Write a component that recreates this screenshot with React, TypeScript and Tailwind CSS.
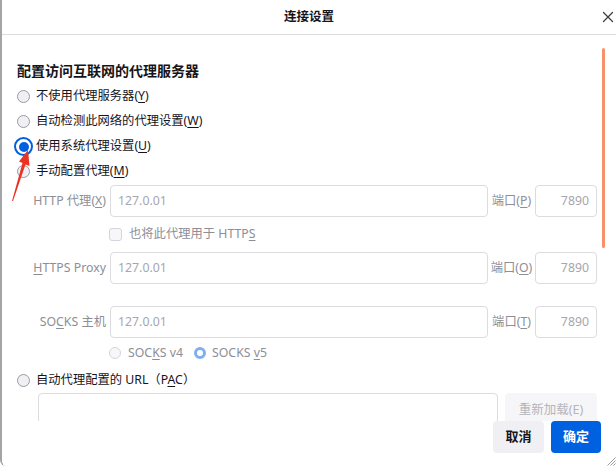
import React from 'react';

const ink = 'text-[#15141a]';
const dim = 'text-[#8e8e96]';

function Radio({ state }: { state: 'off' | 'on' | 'disabled' | 'disabledOn' }) {
  if (state === 'on') {
    return (
      <span className="flex h-[19px] w-[19px] shrink-0 items-center justify-center rounded-full border-2 border-[#0061e0] bg-white -ml-[3px] mr-[-3px]">
        <span className="h-[10px] w-[10px] rounded-full bg-[#0061e0]" />
      </span>
    );
  }
  if (state === 'disabledOn') {
    return <span className="h-[12px] w-[12px] shrink-0 rounded-full border-[3.5px] border-[#80aef0] bg-white" />;
  }
  if (state === 'disabled') {
    return <span className="h-[12px] w-[12px] shrink-0 rounded-full border border-[#d4d4dc] bg-[#f7f7f9]" />;
  }
  return <span className="h-[13px] w-[13px] shrink-0 rounded-full border border-[#9a9aa4] bg-[#f0f0f4]" />;
}

function RadioRow({ children, state = 'off' }: { children: React.ReactNode; state?: 'off' | 'on' }) {
  return (
    <div className={`flex h-[25px] shrink-0 items-center gap-[6px] text-[12.3px] ${ink}`}>
      <Radio state={state} />
      <span>{children}</span>
    </div>
  );
}

function ProxyRow({ label, port }: { label: React.ReactNode; port: React.ReactNode }) {
  return (
    <div className={`flex h-[32px] items-stretch text-[12.3px] ${dim}`}>
      <div className="flex w-[91px] shrink-0 items-center justify-end whitespace-nowrap pr-[4px]">{label}</div>
      <div className="flex flex-1 items-center rounded-[4px] border border-[#dcdce0] bg-white pl-[7px] text-[#a6a6ae]">127.0.01</div>
      <div className="flex w-[47px] shrink-0 items-center justify-center whitespace-nowrap">{port}</div>
      <div className="flex w-[62px] shrink-0 items-center justify-end rounded-[4px] border border-[#dcdce0] bg-white pr-[7px] text-[#a6a6ae]">7890</div>
    </div>
  );
}

export default function App() {
  return (
    <div className="relative flex h-[466px] w-[616px] flex-col overflow-hidden rounded-bl-[6px] border-l-2 border-[#a4a4a4] bg-white font-['Noto_Sans','Noto_Sans_CJK_SC',sans-serif]">
      {/* title bar */}
      <div className="grid h-[35px] shrink-0 grid-cols-[1fr_auto_1fr] items-center border-b border-[#dcdce0]">
        <div />
        <div className={`text-[12.5px] font-bold ${ink}`}>连接设置</div>
        <div className="flex justify-end pr-[2px]">
          <svg width="12" height="12" viewBox="0 0 12 12" fill="none" stroke="#3a3a40" strokeWidth="1.2" strokeLinecap="round">
            <path d="M1.5 1.5l9 9M10.5 1.5l-9 9" />
          </svg>
        </div>
      </div>

      {/* scrolling content */}
      <div className="flex h-[386px] shrink-0 overflow-hidden">
        <div className="flex flex-1 flex-col pl-[15px] pr-[5px] pt-[26px]">
          <div className={`h-[23px] shrink-0 text-[14px] font-bold leading-[20px] ${ink}`}>配置访问互联网的代理服务器</div>
          <RadioRow>不使用代理服务器(<u className="underline-offset-2">Y</u>)</RadioRow>
          <RadioRow>自动检测此网络的代理设置(<u className="underline-offset-2">W</u>)</RadioRow>
          <RadioRow state="on">使用系统代理设置(<u className="underline-offset-2">U</u>)</RadioRow>
          <RadioRow>手动配置代理(<u className="underline-offset-2">M</u>)</RadioRow>

          <div className="mt-[1px] shrink-0 pl-[2px]">
            <ProxyRow
              label={<>HTTP 代理(<u className="underline-offset-2">X</u>)</>}
              port={<>端口(<u className="underline-offset-2">P</u>)</>}
            />
          </div>
          <div className={`flex h-[35px] shrink-0 items-center gap-[7px] pl-[92px] text-[12.3px] ${dim}`}>
            <span className="h-[13px] w-[13px] rounded-[3px] border border-[#d4d4dc] bg-[#f7f7f9]" />
            <span>也将此代理用于 HTTP<u className="underline-offset-2">S</u></span>
          </div>
          <div className="shrink-0 pl-[2px]">
            <ProxyRow
              label={<><u className="underline-offset-2">H</u>TTPS Proxy</>}
              port={<>端口(<u className="underline-offset-2">O</u>)</>}
            />
          </div>
          <div className="mt-[22px] shrink-0 pl-[2px]">
            <ProxyRow
              label={<>SO<u className="underline-offset-2">C</u>KS 主机</>}
              port={<>端口(<u className="underline-offset-2">T</u>)</>}
            />
          </div>
          <div className={`flex h-[30px] shrink-0 items-center pl-[92px] text-[12.3px] ${dim}`}>
            <Radio state="disabled" />
            <span className="ml-[7px] mr-[11px]">SOC<u className="underline-offset-2">K</u>S v4</span>
            <Radio state="disabledOn" />
            <span className="ml-[6px]">SOCKS <u className="underline-offset-2">v</u>5</span>
          </div>
          <div className={`flex h-[24px] shrink-0 items-center gap-[6px] text-[12.3px] ${ink}`}>
            <Radio state="off" />
            <span>自动代理配置的 URL（P<u className="underline-offset-2">A</u>C）</span>
          </div>
          <div className="mt-[1px] flex shrink-0 gap-[7px] pl-[21px]">
            <div className="h-[50px] flex-1 rounded-[4px] border border-[#dcdce0] bg-white" />
            <div className="flex h-[34px] w-[92px] items-center justify-center rounded-[4px] bg-[#f6f6f8] text-[12.5px] text-[#b4b4bc]">
              重新加载(E)
            </div>
          </div>
        </div>
        {/* scrollbar */}
        <div className="mr-[11px] mt-[13px] h-[200px] w-[3px] shrink-0 rounded-full bg-[#f8906a]" />
      </div>

      {/* footer buttons */}
      <div className="flex flex-1 items-start justify-end gap-[7px] bg-white pr-[15px]">
        <button className={`h-[32px] w-[51px] rounded-[4px] bg-[#f0f0f4] text-[13px] font-bold ${ink}`}>取消</button>
        <button className="h-[32px] w-[50px] rounded-[4px] bg-[#0061e0] text-[13px] font-bold text-white">确定</button>
      </div>

      {/* resize grip */}
      <svg className="absolute bottom-0 right-0" width="11" height="11" viewBox="0 0 11 11" stroke="#9a9aa0" strokeWidth="1">
        <path d="M10.5 2.5l-8 8M10.5 5.5l-5 5M10.5 8.5l-2 2" />
      </svg>

      {/* red annotation arrow */}
      <svg className="pointer-events-none absolute left-0 top-0" width="40" height="210" viewBox="0 0 40 210">
        <polygon points="26,150 27.5,166 23.5,164.5 11,201 10,201 20.5,163 17,161.5" fill="#ea3323" />
      </svg>
    </div>
  );
}
